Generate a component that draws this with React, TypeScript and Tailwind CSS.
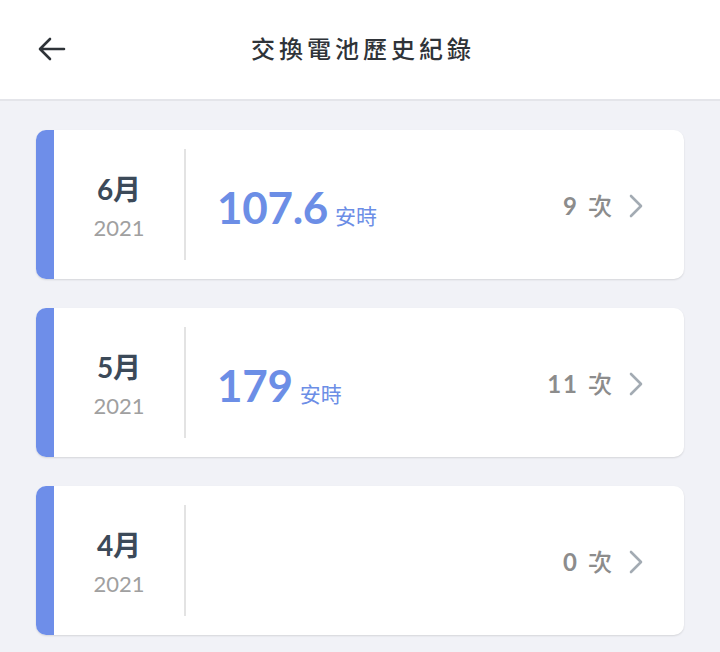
import { FC } from 'react'

interface Record {
  month: string
  year: string
  amount?: string
  count: number
}

const records: Record[] = [
  { month: '6月', year: '2021', amount: '107.6', count: 9 },
  { month: '5月', year: '2021', amount: '179', count: 11 },
  { month: '4月', year: '2021', count: 0 },
]

const font = "font-['Lato','Noto_Sans_CJK_TC',sans-serif]"

const RecordCard: FC<{ record: Record }> = ({ record }) => {
  return (
    <div className="flex h-[149px] rounded-[10px] bg-white shadow-[0_1px_2px_rgba(0,0,0,0.12)] overflow-hidden">
      <div className="w-[18px] bg-[#6e8ee9]" />
      <div className="flex items-center flex-1">
        <div className="flex flex-col items-center w-[130px] leading-none pt-[4px]">
          <span className="text-[28px] font-bold text-[#3c4a59]">{record.month}</span>
          <span className="mt-[14px] text-[22px] text-[#a0a0a0]">{record.year}</span>
        </div>
        <div className="w-[2px] h-[111px] bg-[#e3e3e3]" />
        <div className="flex items-baseline flex-1 pl-[31px] pt-[4px]">
          {record.amount && (
            <>
              <span className="text-[44px] font-bold text-[#6c8ee6] tracking-[-0.3px]">{record.amount}</span>
              <span className="ml-[7px] text-[21px] text-[#6c8ee6]">安時</span>
            </>
          )}
        </div>
        <div className="flex items-center pr-[40px] text-[#8c8c8c] pt-[2px]">
          <span className="text-[24px] font-bold tracking-[2px]">{record.count}</span>
          <span className="ml-[9px] text-[24px] font-medium">次</span>
          <svg className="ml-[16px]" width="16" height="26" viewBox="0 0 16 26" fill="none">
            <path d="M3 3l10 10L3 23" stroke="#a3abb3" strokeWidth="2.6" strokeLinecap="round" strokeLinejoin="round" />
          </svg>
        </div>
      </div>
    </div>
  )
}

const App: FC = () => {
  return (
    <div className={`${font} w-[720px] h-[652px] bg-[#f1f2f7] overflow-hidden`}>
      <header className="relative flex items-center justify-center h-[101px] bg-white border-b-2 border-[#e4e5ea]">
        <svg className="absolute left-[37px] top-[36px]" width="30" height="26" viewBox="0 0 30 26" fill="none">
          <path d="M27 13H4M13 3L3 13l10 10" stroke="#2e3338" strokeWidth="2.6" strokeLinecap="round" strokeLinejoin="round" />
        </svg>
        <h1 className="text-[24px] font-medium tracking-[4px] text-[#2f3338] -mt-[2px] mr-[-6px]">交換電池歷史紀錄</h1>
      </header>
      <main className="flex flex-col gap-[29px] px-[36px] pt-[29px]">
        {records.map((r) => (
          <RecordCard key={r.month} record={r} />
        ))}
      </main>
    </div>
  )
}

export default App
